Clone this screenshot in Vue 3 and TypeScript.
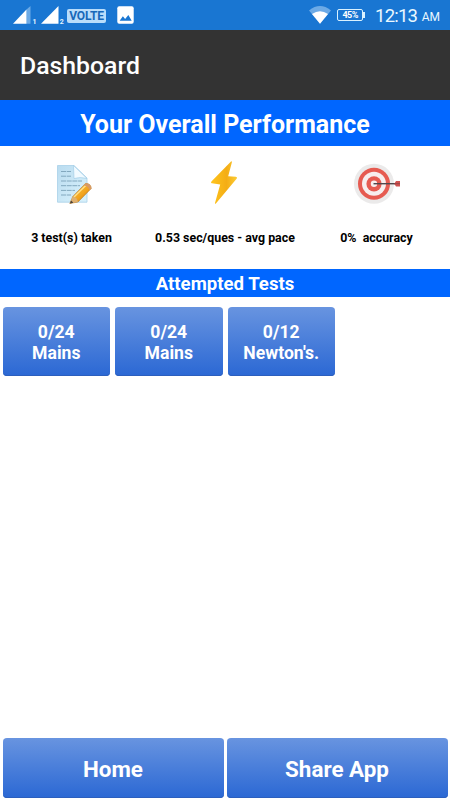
<script setup lang="ts">
interface TestResult {
  id: number
  score: string
  name: string
}

const tests: TestResult[] = [
  { id: 1, score: '0/24', name: 'Mains' },
  { id: 2, score: '0/24', name: 'Mains' },
  { id: 3, score: '0/12', name: "Newton's." },
]

const actions: string[] = ['Home', 'Share App']
</script>

<template>
  <div class="screen">
    <header class="status">
      <div class="status-left">
        <svg class="signal" width="24" height="20" viewBox="0 0 24 20">
          <path d="M13.5 4.5 17.5 1V18.7h-4z" fill="#6caae6" />
          <path d="M0 18.7 13.5 4.5V18.7z" fill="#fff" />
          <text x="19.5" y="18.5" class="sim">1</text>
        </svg>
        <svg class="signal second" width="25" height="20" viewBox="0 0 25 20">
          <path d="M0 18.7 17.5 1V18.7z" fill="#fff" />
          <text x="18.7" y="18.5" class="sim">2</text>
        </svg>
        <span class="volte">VOLTE</span>
        <svg class="photo" width="17" height="18" viewBox="0 0 18 18" preserveAspectRatio="none">
          <rect x=".3" y=".3" width="17.4" height="17.4" rx="2" fill="#fff" />
          <path d="M2.8 14.7 6.2 10.3l2.4 2.8L12 8.9l3.6 5.8z" fill="#1976d2" />
        </svg>
      </div>
      <div class="status-right">
        <svg class="wifi" width="22" height="19" viewBox="0 0 22 19">
          <path d="M0 4.5Q11-4.3 22 4.5L11 17.8z" fill="#6caae6" />
          <path d="M3 8.1Q11 2.4 19 8.1L11 17.8z" fill="#fff" />
        </svg>
        <span class="battery">45%</span>
        <span class="clock">12:13</span>
        <span class="meridiem">AM</span>
      </div>
    </header>

    <div class="app-bar">Dashboard</div>
    <h1 class="banner">Your Overall Performance</h1>

    <section class="stats">
      <div class="stat taken">
        <svg width="38" height="42" viewBox="0 0 38 42">
          <defs>
            <linearGradient id="paper" x1="0" y1="0" x2="1" y2="1">
              <stop offset="0" stop-color="#badcf0" />
              <stop offset="1" stop-color="#d9f2fc" />
            </linearGradient>
            <linearGradient id="pencil" x1="0" y1="0" x2="1" y2="1">
              <stop offset="0" stop-color="#f9cc56" />
              <stop offset=".55" stop-color="#f2a51f" />
              <stop offset="1" stop-color="#b86d16" />
            </linearGradient>
          </defs>
          <path d="M1.5 1.5H18L31 14V38.2H1.5z" fill="url(#paper)" stroke="#a8d0e8" stroke-width=".8" />
          <path d="M17.5 1.5 31 14.5Q24 12.6 18 14.5z" fill="#f1faff" stroke="#9cc9e4" stroke-width=".6" />
          <path d="M5 7.5h10M5 12.2h10M5 17h21M5 21.7h19M5 26.4h14M5 31h10" stroke="#82a8be" stroke-width="1" stroke-dasharray="5 .7" />
          <path d="M13.8 39.5 16.8 32.4 29.5 19.4Q34.8 19.2 35.3 24.4L22 38z" fill="url(#pencil)" stroke="#a96b20" stroke-width=".5" />
          <path d="M18 33 30 21.2" stroke="#ffe28c" stroke-width="1.3" />
          <path d="M29.5 19.4Q34.8 19.2 35.3 24.4L33.5 26.2Q32.4 22.4 27.7 21.3z" fill="#d99a65" />
          <path d="M13.8 39.5 16.8 32.4Q21 33 22 38z" fill="#dfb171" />
          <path d="M13.8 39.5 15.1 36.4 17.4 38.8z" fill="#4c4237" />
        </svg>
        <span>3 test(s) taken</span>
      </div>
      <div class="stat pace">
        <svg width="30" height="46" viewBox="0 0 30 46">
          <defs>
            <linearGradient id="bolt" x1="0" y1="0" x2="1" y2="0">
              <stop offset="0" stop-color="#ffc51d" />
              <stop offset=".6" stop-color="#f4ad15" />
              <stop offset="1" stop-color="#fccd36" />
            </linearGradient>
          </defs>
          <path d="M22 1.5 2.4 21.4Q1.3 23.2 3 23.3L11.2 24.6 6 42.9Q5.9 44.5 7.1 43.3L27.8 18.6Q28.6 16.8 26.8 16.7L19.2 16.3 22.9 2.2Q23 .9 22 1.5z" fill="url(#bolt)" />
        </svg>
        <span>0.53 sec/ques - avg pace</span>
      </div>
      <div class="stat accuracy">
        <svg width="48" height="42" viewBox="0 0 48 42">
          <circle cx="21" cy="20.8" r="20" fill="#ebeaea" />
          <circle cx="21" cy="20.8" r="16" fill="#e65b51" />
          <circle cx="21" cy="20.8" r="12" fill="#f7eeee" />
          <circle cx="21" cy="20.8" r="7.6" fill="#e65b51" />
          <circle cx="21" cy="20.8" r="3.2" fill="#f7eeee" />
          <path d="M20.5 20.7H44" stroke="#51464a" stroke-width="1.4" />
          <path d="M41.3 20.7 43 18h4v5.4h-4z" fill="#cf5150" />
          <path d="M41 20.7H47" stroke="#7d3f43" stroke-width=".7" />
        </svg>
        <span>0%&nbsp; accuracy</span>
      </div>
    </section>

    <h2 class="subheading">Attempted Tests</h2>
    <main class="tests">
      <button v-for="test in tests" :key="test.id" class="tile">
        <span>{{ test.score }}</span>
        <span>{{ test.name }}</span>
      </button>
    </main>
    <nav class="actions">
      <button v-for="action in actions" :key="action">{{ action }}</button>
    </nav>
  </div>
</template>

<style>
body { margin: 0; }
</style>

<style scoped>
.screen {
  display: flex;
  flex-direction: column;
  width: 450px;
  height: 800px;
  overflow: hidden;
  background: #fff;
  color: #fff;
  font-family: Roboto, sans-serif;
}
.status {
  display: flex;
  justify-content: space-between;
  box-sizing: border-box;
  height: 30px;
  padding: 0 10px 0 13px;
  background: #1976d2;
}
.status-left, .status-right { display: flex; align-items: flex-start; }
.signal { flex: none; margin-top: 5px; }
.second { margin-left: 4px; }
.sim { fill: #e6f5ff; font-size: 7px; font-weight: 700; }
.volte {
  box-sizing: border-box;
  width: 39px;
  height: 14px;
  margin: 9px 0 0 1px;
  border-radius: 2px;
  background: #b9ddfb;
  color: #1768b9;
  font-size: 12px;
  font-weight: 700;
  letter-spacing: -.2px;
  line-height: 15px;
  text-align: center;
}
.photo { margin: 6px 0 0 11px; }
.wifi { margin-top: 6px; }
.battery {
  position: relative;
  box-sizing: border-box;
  width: 26px;
  height: 12px;
  margin: 9px 0 0 6px;
  border: 1px solid #d9f2ff;
  border-radius: 2px;
  font-size: 9px;
  font-weight: 700;
  letter-spacing: -.6px;
  line-height: 11px;
  text-align: center;
}
.battery::after {
  content: '';
  position: absolute;
  top: 2px;
  right: -3px;
  width: 2px;
  height: 6px;
  background: #d9f2ff;
}
.clock { margin: 4px 0 0 12px; color: #eaf8ff; font-size: 18.5px; letter-spacing: -.8px; line-height: 24px; }
.meridiem { margin: 9px 0 0 4.5px; color: #eaf8ff; font-size: 12px; line-height: 16px; }
.app-bar {
  box-sizing: border-box;
  height: 70px;
  padding: 1px 20px 0;
  background: #333;
  font-size: 24.8px;
  font-weight: 500;
  line-height: 69px;
}
.banner, .subheading { margin: 0; background: #06f; text-align: center; font-weight: 700; }
.banner { height: 46px; font-size: 25px; line-height: 49px; }
.stats { display: flex; height: 123px; color: #000; }
.stat { display: flex; flex-direction: column; align-items: center; font-size: 12.4px; font-weight: 700; white-space: nowrap; }
.stat svg { flex: none; }
.stat span { margin-top: auto; margin-bottom: 23px; line-height: 16px; }
.taken { width: 143px; }
.taken svg { margin: 18px 0 0 6px; }
.pace { width: 164px; }
.pace svg { margin: 14px 0 0 -2px; }
.accuracy { width: 139px; }
.accuracy svg { margin: 17px 0 0; }
.subheading { height: 28px; font-size: 18.6px; line-height: 30px; }
.tests { display: flex; gap: 5px; padding: 10px 2.5px; }
button {
  padding: 0;
  border: 0;
  border-radius: 4px;
  background: linear-gradient(#6894e0, #2b68d4);
  box-shadow: inset 0 -1px 0 #2c5fbd;
  color: #fff;
  font-family: inherit;
  font-weight: 700;
}
.tile {
  display: flex;
  flex-direction: column;
  align-items: center;
  justify-content: center;
  width: 107.5px;
  height: 69px;
  padding-top: 2px;
  font-size: 17.6px;
  line-height: 20.5px;
}
.actions { display: flex; gap: 3px; margin-top: auto; padding: 0 2.5px 2.5px; }
.actions button { flex: 1; height: 60px; padding-top: 2px; font-size: 22.4px; }
</style>
